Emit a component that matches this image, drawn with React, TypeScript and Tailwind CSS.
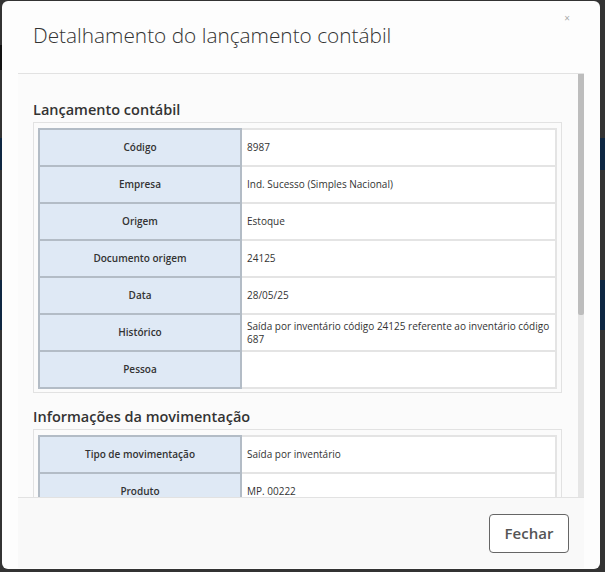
import React from 'react';

interface Row {
  label: string;
  value: string;
}

const lancamento: Row[] = [
  { label: 'Código', value: '8987' },
  { label: 'Empresa', value: 'Ind. Sucesso (Simples Nacional)' },
  { label: 'Origem', value: 'Estoque' },
  { label: 'Documento origem', value: '24125' },
  { label: 'Data', value: '28/05/25' },
  { label: 'Histórico', value: 'Saída por inventário código 24125 referente ao inventário código 687' },
  { label: 'Pessoa', value: '' },
];

const movimentacao: Row[] = [
  { label: 'Tipo de movimentação', value: 'Saída por inventário' },
  { label: 'Produto', value: 'MP. 00222' },
];

function DetailTable({ rows }: { rows: Row[] }) {
  return (
    <div className="border border-[#e2e2e2] pt-[5px] pr-[4px] pb-[3px] pl-[4px]">
      <table className="w-full border-collapse text-[10px] text-[#333]">
        <tbody>
          {rows.map((row) => (
            <tr key={row.label} className="h-[37px]">
              <td className="w-[202px] border-2 border-[#b3bcc6] bg-[#dfe9f5] text-center font-semibold">
                {row.label}
              </td>
              <td className="border-2 border-[#e4e4e4] bg-white px-[5px] align-middle leading-[13px]">
                {row.value}
              </td>
            </tr>
          ))}
        </tbody>
      </table>
    </div>
  );
}

function SectionTitle({ children }: { children: React.ReactNode }) {
  return (
    <h4 className="mt-[13px] mb-[1px] text-[14.5px] leading-[22px] font-semibold text-[#333]">
      {children}
    </h4>
  );
}

export default function App() {
  return (
    <div
      className="relative h-[572px] w-[605px] overflow-hidden bg-[#333]"
      style={{ fontFamily: '"Open Sans", "Noto Sans", sans-serif' }}
    >
      {/* dimmed page behind the modal */}
      <div className="flex flex-col">
        <div className="h-[45px]" />
        <div className="h-[25px] w-[3px] bg-[#111]" />
        <div className="h-[68px]" />
        <div className="h-[32px] bg-[#0e2742]" />
        <div className="h-[110px]" />
        <div className="h-[50px] bg-[#0e2742]" />
      </div>

      <div className="absolute top-[1px] left-[2px] flex h-[568px] w-[598px] flex-col rounded-[6px] bg-[#fdfdfd] px-[16px] pb-[1px]">
        <div className="relative flex h-[73px] shrink-0 items-center border-b border-[#e2e2e2] px-[15px] pb-[2px]">
          <h2 className="text-[20.8px] font-light text-[#333]">Detalhamento do lançamento contábil</h2>
          <span className="absolute top-[12px] right-[14px] text-[10px] leading-none text-[#aaa]">×</span>
        </div>

        <div className="flex h-[423px] shrink-0 bg-[#fbfbfb]">
          <div className="flex-1 overflow-hidden pt-[12px] pr-[16px] pl-[15px]">
            <SectionTitle>Lançamento contábil</SectionTitle>
            <DetailTable rows={lancamento} />
            <SectionTitle>Informações da movimentação</SectionTitle>
            <DetailTable rows={movimentacao} />
          </div>
          <div className="w-[6px] bg-[#e6e6e6]">
            <div className="h-[241px] rounded-b-[2px] bg-[#bdbdbd]" />
          </div>
        </div>

        <div className="flex flex-1 items-center justify-end border-t border-[#e2e2e2] bg-[#f9f9f9] pr-[15px]">
          <button className="h-[39px] w-[80px] rounded-[4px] border border-[#666] bg-white text-[15px] font-semibold text-[#555]">
            Fechar
          </button>
        </div>
      </div>
    </div>
  );
}
